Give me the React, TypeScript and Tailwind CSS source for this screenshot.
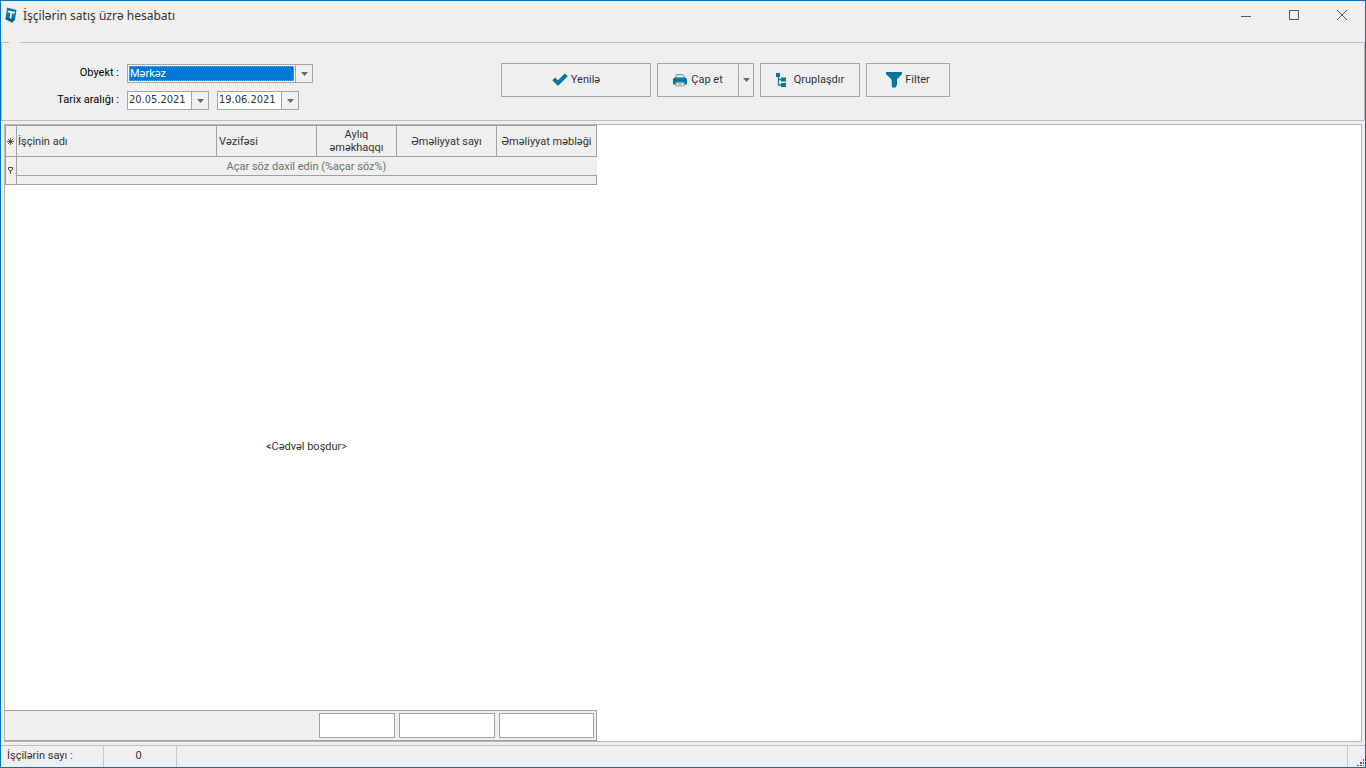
import React, { useState } from 'react';

const columns = [
  { title: 'İşçinin adı', className: 'w-[200px] px-px text-left' },
  { title: 'Vəzifəsi', className: 'w-[100px] px-[2px] text-left' },
  { title: 'Aylıq əməkhaqqı', className: 'w-[80px] px-2 text-center' },
  { title: 'Əməliyyat sayı', className: 'w-[100px] px-0 text-center' },
  { title: 'Əməliyyat məbləği', className: 'w-[100px] px-0 text-center' },
];

const ArrowIcon = () => (
  <svg width="7" height="4" viewBox="0 0 7 4" className="fill-[#6a6a6a]" aria-hidden="true">
    <path d="M0 0h7L3.5 4z" />
  </svg>
);

const LogoIcon = () => (
  <svg width="13" height="16" viewBox="0 0 13 16" aria-hidden="true">
    <path d="M2 0.500L11.500 3 10 12.500 7 15.500 0.500 12z" fill="#0a7ba8" />
    <path d="M0.500 12L7 15.500 10 12.500 1 10.500z" fill="#075a80" />
    <path d="M2.800 4.300L9.800 5.800M6.400 5L5.400 11.400" stroke="#fff" strokeWidth="1.7" fill="none" />
  </svg>
);

const CheckIcon = () => (
  <svg width="16" height="14" viewBox="0 0 16 14" aria-hidden="true">
    <path d="M0.3 7.2L3 4.6 6 7.2 12.9 0.6 15.7 3.3 6 13z" fill="#0577a3" />
  </svg>
);

const PrinterIcon = () => (
  <svg width="14" height="14" viewBox="0 0 14 14" aria-hidden="true">
    <path d="M3 5V2l1-0.500h6L11 2.500V5" fill="#dbe8ee" stroke="#5f9fb8" />
    <path d="M1.500 4.500h11L14 6v5.500H0V6z" fill="#0577a3" />
    <path d="M3 9.500h8v3.500H3z" fill="#eee" stroke="#6fa9be" />
    <path d="M5 10h4v2H5z" fill="#f5b283" />
  </svg>
);

const TreeIcon = () => (
  <svg width="10" height="15" viewBox="0 0 10 15" aria-hidden="true">
    <path d="M0 0h4v4H0zM5 4.500h5v4H5zM5 10h5v4H5z" fill="#0577a3" />
    <path d="M2.500 4v8H6M2.500 6.500H6" fill="none" stroke="#1d84ab" strokeWidth="1.3" />
  </svg>
);

const FilterIcon = () => (
  <svg width="16" height="16" viewBox="0 0 16 16" aria-hidden="true">
    <path d="M0 0h16V2L11 7.500V13L9.500 15.500H6L5.500 7.500 0 2z" fill="#0577a3" />
    <path d="M0 1.500h16" stroke="#04688f" />
  </svg>
);

type DateBoxProps = {
  label: string;
  value: string;
  onChange: (value: string) => void;
};

const DateBox: React.FC<DateBoxProps> = ({ label, value, onChange }) => (
  <div className="flex h-[19px] w-[82px] border border-[#a5a5a5] bg-white">
    <input
      type="text"
      aria-label={label}
      value={value}
      onChange={(e) => onChange(e.target.value)}
      className="w-[63px] px-px font-['DejaVu_Sans_Condensed','DejaVu_Sans',sans-serif] text-[#333] outline-none"
    />
    <button
      type="button"
      aria-label={`${label} seç`}
      className="flex flex-1 items-center justify-center border-l border-[#a5a5a5] bg-[#f0f0f0]"
    >
      <ArrowIcon />
    </button>
  </div>
);

const TitleBar = () => (
  <header className="flex h-[41px] shrink-0 items-start justify-between pl-1">
    <div className="flex h-7 items-center gap-[5px]">
      <LogoIcon />
      <h1 className="pt-px font-['Noto_Sans',sans-serif] text-[12px]">İşçilərin satış üzrə hesabatı</h1>
    </div>
    <div className="flex h-7 text-[#555]">
      <button type="button" aria-label="Kiçilt" className="flex w-12 items-center justify-center pl-[2px]">
        <svg width="10" height="10" viewBox="0 0 10 10" fill="none" stroke="currentColor">
          <path d="M0 6.500h10" />
        </svg>
      </button>
      <button type="button" aria-label="Böyüt" className="flex w-12 items-center justify-center pl-[2px]">
        <svg width="10" height="10" viewBox="0 0 10 10" fill="none" stroke="currentColor">
          <path d="M0.500 0.500h9v9h-9z" />
        </svg>
      </button>
      <button type="button" aria-label="Bağla" className="flex w-12 items-center justify-center pl-[2px]">
        <svg width="10" height="10" viewBox="0 0 10 10" fill="none" stroke="currentColor">
          <path d="M0 0l10 10M10 0L0 10" />
        </svg>
      </button>
    </div>
  </header>
);

const Toolbar = () => {
  const [branch, setBranch] = useState('Mərkəz');
  const [from, setFrom] = useState('20.05.2021');
  const [to, setTo] = useState('19.06.2021');

  const button = 'flex h-full items-center justify-center border border-[#a5a5a5]';

  return (
    <fieldset className="h-[79px] shrink-0 border border-[#bdbdbd] px-[7px]">
      <legend className="h-px w-[11px]" />
      <div className="flex items-start pt-5">
        <div className="flex w-[492px] flex-col gap-2 pt-px">
          <div className="flex h-[19px] items-center gap-2">
            <label htmlFor="branch" className="w-[110px] text-right text-black">
              Obyekt :
            </label>
            <div className="flex h-[19px] w-[186px] border border-[#a5a5a5] bg-white">
              <div className="flex flex-1 p-px">
                <select
                  id="branch"
                  value={branch}
                  onChange={(e) => setBranch(e.target.value)}
                  className="flex-1 appearance-none border border-dotted border-[#ff8728] bg-[#0078d7] leading-[12px] text-white outline-none"
                >
                  <option>Mərkəz</option>
                </select>
              </div>
              <span className="flex w-[17px] items-center justify-center border-l border-[#a5a5a5] bg-[#f0f0f0]">
                <ArrowIcon />
              </span>
            </div>
          </div>
          <div className="flex h-[19px] items-center gap-2">
            <span className="w-[110px] text-right text-black">Tarix aralığı :</span>
            <DateBox label="Başlanğıc tarixi" value={from} onChange={setFrom} />
            <DateBox label="Son tarix" value={to} onChange={setTo} />
          </div>
        </div>
        <div className="flex h-[34px] gap-[6px]">
          <button type="button" className={`${button} w-[150px] gap-[3px]`}>
            <CheckIcon />
            Yenilə
          </button>
          <div className="flex w-[97px] border border-[#a5a5a5]">
            <button type="button" className="flex flex-1 items-center justify-center gap-1">
              <PrinterIcon />
              Çap et
            </button>
            <button
              type="button"
              aria-label="Çap seçimləri"
              className="flex w-[15px] items-center justify-center border-l border-[#a5a5a5]"
            >
              <ArrowIcon />
            </button>
          </div>
          <button type="button" className={`${button} w-[100px] gap-2`}>
            <TreeIcon />
            Qruplaşdır
          </button>
          <button type="button" className={`${button} w-[84px] gap-[3px]`}>
            <FilterIcon />
            Filter
          </button>
        </div>
      </div>
    </fieldset>
  );
};

const EmployeeTable = () => (
  <main className="m-[3px] flex min-h-0 flex-1 border border-[#b4b4b4] bg-white">
    <div className="flex w-[592px] flex-col">
      <table className="w-full table-fixed border-collapse border border-[#a0a0a0] bg-[#efefef] leading-[13px]">
        <thead>
          <tr className="h-[31px]">
            <th className="w-[11px] border border-[#a0a0a0] p-0" aria-label="Sütunlar">
              <svg width="9" height="7" viewBox="0 0 9 7" stroke="#444" strokeWidth="0.9">
                <path d="M4.500 0v7M1 3.500h7M2 1l5 5M7 1L2 6" />
              </svg>
            </th>
            {columns.map((column) => (
              <th
                key={column.title}
                className={`border border-[#a0a0a0] py-0 font-normal ${column.className}`}
              >
                {column.title}
              </th>
            ))}
          </tr>
        </thead>
        <tbody>
          <tr className="h-[19px]">
            <td rowSpan={2} className="border border-[#a0a0a0] p-0">
              <svg width="9" height="7" viewBox="0 0 9 7" fill="none" stroke="#444">
                <path d="M2.500 0.500h4v2L4.500 4L2.500 2.500zM4.500 3.500V7" />
              </svg>
            </td>
            <td colSpan={5} className="border border-[#a0a0a0] border-r-[#efefef] p-0 text-center text-[#707070]">
              Açar söz daxil edin (%açar söz%)
            </td>
          </tr>
          <tr className="h-[9px]">
            <td colSpan={5} className="border border-[#a0a0a0] p-0" />
          </tr>
        </tbody>
      </table>
      <p className="flex flex-1 items-center justify-center pl-[11px]">&lt;Cədvəl boşdur&gt;</p>
      <div className="flex h-[31px] justify-end gap-1 border border-l-0 border-[#a0a0a0] bg-[#efefef] p-[2px]">
        <div className="w-[76px] border border-[#a0a0a0] bg-white" />
        <div className="w-[96px] border border-[#a0a0a0] bg-white" />
        <div className="w-[95px] border border-[#a0a0a0] bg-white" />
      </div>
    </div>
  </main>
);

const StatusBar = () => (
  <footer className="flex h-[22px] shrink-0 border-t border-[#bdbdbd] bg-[#f0f0f0]">
    <div className="flex w-[103px] items-center border-r border-[#c8c8c8] pl-[6px]">İşçilərin sayı :</div>
    <div className="flex w-[73px] items-center justify-center border-r border-[#c8c8c8] pr-[3px]">0</div>
    <div className="flex-1 border-r border-[#c8c8c8]" />
    <div className="flex w-[17px] items-end justify-end">
      <svg width="8" height="8" viewBox="0 0 8 8" fill="#555" aria-hidden="true">
        <path d="M6 0h1v2H6zM3 3h2v2H3zM6 3h1v2H6zM0 6h2v1H0zM3 6h2v1H3zM6 6h1v1H6z" />
      </svg>
    </div>
  </footer>
);

const App: React.FC = () => {
  return (
    <div className="flex h-screen flex-col border border-[#0072c6] bg-[#efefef] font-[Roboto,'Noto_Sans',sans-serif] text-[11px] text-[#333]">
      <TitleBar />
      <Toolbar />
      <EmployeeTable />
      <StatusBar />
    </div>
  );
};

export default App;
